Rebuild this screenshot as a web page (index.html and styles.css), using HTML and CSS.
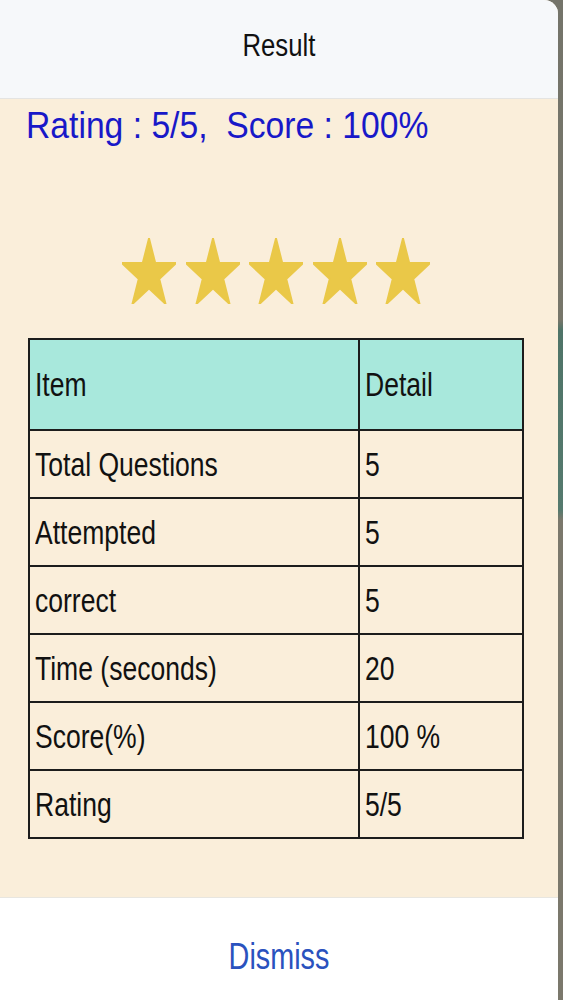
FILE: index.html
```html
<!DOCTYPE html>
<html lang="en">
<head>
<meta charset="utf-8">
<title>Result</title>
<link rel="stylesheet" href="styles.css">
</head>
<body>
<div class="panel">
  <header class="header">
    <span class="title">Result</span>
  </header>
  <main class="content">
    <div class="rating"><span class="rating-text">Rating : 5/5,&nbsp; Score : 100%</span></div>
    <div class="stars">
      <svg class="star" viewBox="2.45 0 95.1 90.45" preserveAspectRatio="none"><polygon points="50,0 61.23,34.55 97.55,34.55 68.17,55.9 79.39,90.45 50,69.1 20.61,90.45 31.83,55.9 2.45,34.55 38.77,34.55"/></svg>
      <svg class="star" viewBox="2.45 0 95.1 90.45" preserveAspectRatio="none"><polygon points="50,0 61.23,34.55 97.55,34.55 68.17,55.9 79.39,90.45 50,69.1 20.61,90.45 31.83,55.9 2.45,34.55 38.77,34.55"/></svg>
      <svg class="star" viewBox="2.45 0 95.1 90.45" preserveAspectRatio="none"><polygon points="50,0 61.23,34.55 97.55,34.55 68.17,55.9 79.39,90.45 50,69.1 20.61,90.45 31.83,55.9 2.45,34.55 38.77,34.55"/></svg>
      <svg class="star" viewBox="2.45 0 95.1 90.45" preserveAspectRatio="none"><polygon points="50,0 61.23,34.55 97.55,34.55 68.17,55.9 79.39,90.45 50,69.1 20.61,90.45 31.83,55.9 2.45,34.55 38.77,34.55"/></svg>
      <svg class="star" viewBox="2.45 0 95.1 90.45" preserveAspectRatio="none"><polygon points="50,0 61.23,34.55 97.55,34.55 68.17,55.9 79.39,90.45 50,69.1 20.61,90.45 31.83,55.9 2.45,34.55 38.77,34.55"/></svg>
    </div>
    <table class="results">
      <tr class="head-row"><td class="col-item"><span class="cell-text">Item</span></td><td><span class="cell-text">Detail</span></td></tr>
      <tr><td class="col-item"><span class="cell-text">Total Questions</span></td><td><span class="cell-text">5</span></td></tr>
      <tr><td class="col-item"><span class="cell-text">Attempted</span></td><td><span class="cell-text">5</span></td></tr>
      <tr><td class="col-item"><span class="cell-text">correct</span></td><td><span class="cell-text">5</span></td></tr>
      <tr><td class="col-item"><span class="cell-text">Time (seconds)</span></td><td><span class="cell-text">20</span></td></tr>
      <tr><td class="col-item"><span class="cell-text">Score(%)</span></td><td><span class="cell-text">100 %</span></td></tr>
      <tr><td class="col-item"><span class="cell-text">Rating</span></td><td><span class="cell-text">5/5</span></td></tr>
    </table>
  </main>
  <footer class="footer">
    <span class="dismiss">Dismiss</span>
  </footer>
</div>
</body>
</html>
```
FILE: styles.css
```css
html, body {
  margin: 0;
  padding: 0;
}
body {
  height: 1000px;
  overflow: hidden;
  font-family: "Liberation Sans", Arial, sans-serif;
  background: linear-gradient(to bottom, #74746a 0px, #77766a 320px, #4f7468 330px, #557a6e 510px, #7b786c 520px, #7b786c 1000px);
}
.panel {
  width: 558px;
  height: 1000px;
  display: flex;
  flex-direction: column;
  border-top-right-radius: 14px;
  overflow: hidden;
  background: #faeeda;
}
.header {
  height: 70px;
  padding-top: 28px;
  background: #f6f8fa;
  border-bottom: 1px solid #e4e4e2;
  text-align: center;
}
.title {
  display: inline-block;
  font-size: 31px;
  line-height: 36px;
  color: #111111;
  transform: scaleX(0.83);
  transform-origin: center;
}
.content {
  flex: 1;
  width: 552px;
  display: flex;
  flex-direction: column;
  align-items: center;
}
.rating {
  align-self: flex-start;
  margin-top: 6px;
  padding-left: 26px;
  font-size: 37px;
  line-height: 42px;
  white-space: nowrap;
}
.rating-text {
  display: inline-block;
  color: #1818c8;
  transform: scaleX(0.91);
  transform-origin: left center;
}
.stars {
  margin-top: 91px;
  display: flex;
  gap: 9.5px;
  height: 66px;
}
.star {
  width: 54px;
  height: 66px;
  fill: #eac848;
  stroke: #eac848;
  stroke-width: 3;
  stroke-linejoin: round;
}
.results {
  margin-top: 34px;
  width: 496px;
  border-collapse: collapse;
  border: 2px solid #1c1c1c;
}
.results td {
  border: 2px solid #1c1c1c;
  height: 66px;
  padding: 0 0 0 5px;
  vertical-align: middle;
  font-size: 34px;
  color: #111111;
  white-space: nowrap;
}
.results .col-item {
  width: 323px;
}
.results .head-row td {
  height: 89px;
  background: #a8e8dc;
}
.cell-text {
  display: inline-block;
  transform: scaleX(0.78);
  transform-origin: left center;
}
.footer {
  height: 63px;
  padding-top: 39px;
  background: #ffffff;
  border-top: 1px solid #e8e6e0;
  text-align: center;
}
.dismiss {
  display: inline-block;
  font-size: 36px;
  line-height: 40px;
  color: #2a52be;
  transform: scaleX(0.8);
  transform-origin: center;
}
```
